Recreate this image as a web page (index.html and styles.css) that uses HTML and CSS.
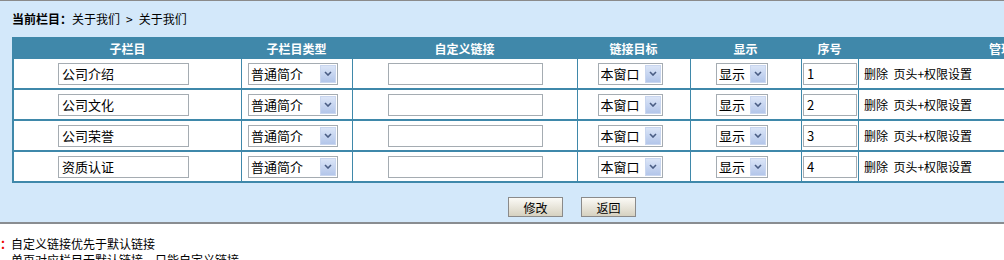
FILE: index.html
```html
<!DOCTYPE html>
<html lang="zh-CN">
<head>
    <meta charset="UTF-8">
    <title>栏目管理</title>
    <link rel="stylesheet" href="styles.css">
</head>
<body>

<div class="page">
    <div class="panel">
        <div class="crumb"><b>当前栏目：</b>关于我们<span class="sep">&gt;</span>关于我们</div>

        <form action="column_save.php" method="post">
            <table class="grid">
                <colgroup>
                    <col class="c-name">
                    <col class="c-type">
                    <col class="c-link">
                    <col class="c-target">
                    <col class="c-show">
                    <col class="c-order">
                    <col class="c-manage">
                </colgroup>
                <thead>
                    <tr>
                        <th>子栏目</th>
                        <th>子栏目类型</th>
                        <th>自定义链接</th>
                        <th>链接目标</th>
                        <th>显示</th>
                        <th>序号</th>
                        <th>管理</th>
                    </tr>
                </thead>
                <tbody>
                    <tr>
                        <td><input class="txt txt-name" type="text" name="name[]" value="公司介绍"></td>
                        <td><span class="sel sel-type"><select name="type[]"><option>普通简介</option><option>图文列表</option></select><span class="arrow"><svg width="8" height="5" viewBox="0 0 8 5"><path d="M1 1L4 4L7 1" fill="none" stroke="#4a5d84" stroke-width="1.6"/></svg></span></span></td>
                        <td><input class="txt txt-link" type="text" name="link[]"></td>
                        <td><span class="sel sel-target"><select name="target[]"><option>本窗口</option><option>新窗口</option></select><span class="arrow"><svg width="8" height="5" viewBox="0 0 8 5"><path d="M1 1L4 4L7 1" fill="none" stroke="#4a5d84" stroke-width="1.6"/></svg></span></span></td>
                        <td><span class="sel sel-show"><select name="show[]"><option>显示</option><option>隐藏</option></select><span class="arrow"><svg width="8" height="5" viewBox="0 0 8 5"><path d="M1 1L4 4L7 1" fill="none" stroke="#4a5d84" stroke-width="1.6"/></svg></span></span></td>
                        <td><input class="txt txt-order" type="text" name="order[]" value="1"></td>
                        <td class="manage">删除&nbsp; 页头+权限设置</td>
                    </tr>
                    <tr>
                        <td><input class="txt txt-name" type="text" name="name[]" value="公司文化"></td>
                        <td><span class="sel sel-type"><select name="type[]"><option>普通简介</option><option>图文列表</option></select><span class="arrow"><svg width="8" height="5" viewBox="0 0 8 5"><path d="M1 1L4 4L7 1" fill="none" stroke="#4a5d84" stroke-width="1.6"/></svg></span></span></td>
                        <td><input class="txt txt-link" type="text" name="link[]"></td>
                        <td><span class="sel sel-target"><select name="target[]"><option>本窗口</option><option>新窗口</option></select><span class="arrow"><svg width="8" height="5" viewBox="0 0 8 5"><path d="M1 1L4 4L7 1" fill="none" stroke="#4a5d84" stroke-width="1.6"/></svg></span></span></td>
                        <td><span class="sel sel-show"><select name="show[]"><option>显示</option><option>隐藏</option></select><span class="arrow"><svg width="8" height="5" viewBox="0 0 8 5"><path d="M1 1L4 4L7 1" fill="none" stroke="#4a5d84" stroke-width="1.6"/></svg></span></span></td>
                        <td><input class="txt txt-order" type="text" name="order[]" value="2"></td>
                        <td class="manage">删除&nbsp; 页头+权限设置</td>
                    </tr>
                    <tr>
                        <td><input class="txt txt-name" type="text" name="name[]" value="公司荣誉"></td>
                        <td><span class="sel sel-type"><select name="type[]"><option>普通简介</option><option>图文列表</option></select><span class="arrow"><svg width="8" height="5" viewBox="0 0 8 5"><path d="M1 1L4 4L7 1" fill="none" stroke="#4a5d84" stroke-width="1.6"/></svg></span></span></td>
                        <td><input class="txt txt-link" type="text" name="link[]"></td>
                        <td><span class="sel sel-target"><select name="target[]"><option>本窗口</option><option>新窗口</option></select><span class="arrow"><svg width="8" height="5" viewBox="0 0 8 5"><path d="M1 1L4 4L7 1" fill="none" stroke="#4a5d84" stroke-width="1.6"/></svg></span></span></td>
                        <td><span class="sel sel-show"><select name="show[]"><option>显示</option><option>隐藏</option></select><span class="arrow"><svg width="8" height="5" viewBox="0 0 8 5"><path d="M1 1L4 4L7 1" fill="none" stroke="#4a5d84" stroke-width="1.6"/></svg></span></span></td>
                        <td><input class="txt txt-order" type="text" name="order[]" value="3"></td>
                        <td class="manage">删除&nbsp; 页头+权限设置</td>
                    </tr>
                    <tr>
                        <td><input class="txt txt-name" type="text" name="name[]" value="资质认证"></td>
                        <td><span class="sel sel-type"><select name="type[]"><option>普通简介</option><option>图文列表</option></select><span class="arrow"><svg width="8" height="5" viewBox="0 0 8 5"><path d="M1 1L4 4L7 1" fill="none" stroke="#4a5d84" stroke-width="1.6"/></svg></span></span></td>
                        <td><input class="txt txt-link" type="text" name="link[]"></td>
                        <td><span class="sel sel-target"><select name="target[]"><option>本窗口</option><option>新窗口</option></select><span class="arrow"><svg width="8" height="5" viewBox="0 0 8 5"><path d="M1 1L4 4L7 1" fill="none" stroke="#4a5d84" stroke-width="1.6"/></svg></span></span></td>
                        <td><span class="sel sel-show"><select name="show[]"><option>显示</option><option>隐藏</option></select><span class="arrow"><svg width="8" height="5" viewBox="0 0 8 5"><path d="M1 1L4 4L7 1" fill="none" stroke="#4a5d84" stroke-width="1.6"/></svg></span></span></td>
                        <td><input class="txt txt-order" type="text" name="order[]" value="4"></td>
                        <td class="manage">删除&nbsp; 页头+权限设置</td>
                    </tr>
                </tbody>
            </table>

            <div class="actions">
                <button type="submit">修改</button>
                <button type="button">返回</button>
            </div>
        </form>
    </div>

    <div class="notes">
        <p><span class="mark">：</span>自定义链接优先于默认链接</p>
        <p>单页对应栏目无默认链接，只能自定义链接</p>
    </div>
</div>

</body>
</html>
```

FILE: styles.css
```css
html, body {
    margin: 0;
    padding: 0;
    overflow: hidden;
}

body {
    font-family: "Noto Sans CJK SC", "Liberation Sans", sans-serif;
    font-size: 12px;
    color: #000;
    background: #fff;
}

.page {
    width: 1160px;
}

.panel {
    background: #d3e8fa;
    border-top: 1px solid #8a8a8a;
    border-bottom: 2px solid #898d91;
    padding: 0 12px 5px;
}

.crumb {
    height: 36px;
    line-height: 35px;
}

.crumb .sep {
    margin: 0 6px;
}

/* table */
.grid {
    width: 1134px;
    table-layout: fixed;
    border-collapse: separate;
    border-spacing: 0;
    border: 2px solid #3f88aa;
    background: #fff;
}

.c-name { width: 227px; }
.c-type { width: 111px; }
.c-link { width: 225px; }
.c-target { width: 113px; }
.c-show { width: 111px; }
.c-order { width: 57px; }
.c-manage { width: 286px; }

.grid th {
    height: 20px;
    padding: 0;
    background: #4088aa;
    color: #fff;
    font-weight: bold;
    text-align: center;
    line-height: 20px;
}

.grid td {
    height: 29px;
    padding: 0;
    text-align: center;
    vertical-align: middle;
    border-left: 1px solid #3f88aa;
    border-top: 2px solid #3f88aa;
}

.grid tbody tr:first-child td {
    border-top: none;
}

.grid td:first-child {
    border-left: none;
}

.grid td.manage {
    text-align: left;
    padding-left: 5px;
    white-space: nowrap;
}

/* form controls */
.txt {
    box-sizing: border-box;
    height: 22px;
    border: 1px solid #a5acb2;
    padding: 0 3px;
    font-family: inherit;
    font-size: 13px;
    background: #fff;
    vertical-align: middle;
    outline: none;
}

.txt-name { width: 131px; margin-right: 8px; }
.txt-link { width: 155px; }
.txt-order { width: 54px; }

.sel {
    display: inline-flex;
    box-sizing: border-box;
    height: 22px;
    margin-right: 8px;
    border: 1px solid #a5acb2;
    background: #fff;
    vertical-align: middle;
}

.sel-type { width: 90px; }
.sel-target { width: 65px; }
.sel-show { width: 52px; }

.sel select {
    appearance: none;
    -webkit-appearance: none;
    flex: 1;
    min-width: 0;
    border: none;
    background: transparent;
    padding: 0 2px;
    font-family: inherit;
    font-size: 13px;
    color: #000;
    outline: none;
}

.sel .arrow {
    width: 14px;
    margin: 1px;
    border: 1px solid #c9d6ef;
    background: linear-gradient(#dbe5f7, #b3c6ea);
    display: flex;
    align-items: center;
    justify-content: center;
}

/* buttons */
.actions {
    display: flex;
    justify-content: center;
    gap: 18px;
    margin-top: 14px;
    padding-right: 16px;
}

.actions button {
    width: 55px;
    height: 20px;
    padding: 0;
    border: 1px solid #8a8a8a;
    background: linear-gradient(#fbfaf6, #d6d1c0);
    font-family: inherit;
    font-size: 12px;
    color: #000;
    cursor: pointer;
}

/* notes */
.notes {
    padding-top: 12px;
}

.notes p {
    margin: 0;
    line-height: 16px;
    padding-left: 11px;
}

.notes .mark {
    color: #e00;
    font-weight: bold;
    margin-left: -11px;
    display: inline-block;
    width: 11px;
}
```
